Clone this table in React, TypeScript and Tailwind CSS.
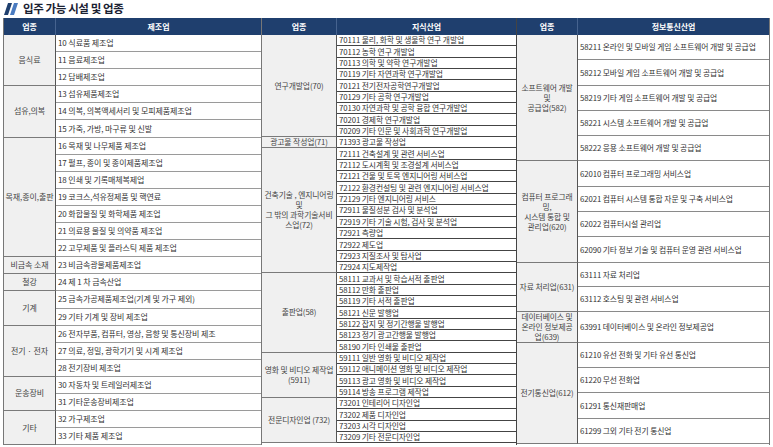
import React from 'react';

type Group = { name: string; items: string[]; rowClass?: string };

const manufacturing: Group[] = [
  { name: '음식료', items: ['10 식료품 제조업', '11 음료제조업', '12 담배제조업'] },
  {
    name: '섬유,의복',
    items: ['13 섬유제품제조업', '14 의복, 의복액세서리 및 모피제품제조업', '15 가죽, 가방, 마구류 및 신발'],
  },
  {
    name: '목재,종이,출판',
    items: [
      '16 목재 및 나무제품 제조업',
      '17 펄프, 종이 및 종이제품제조업',
      '18 인쇄 및 기록매체복제업',
      '19 코크스,석유정제품 및 핵연료',
      '20 화합물질 및 화학제품 제조업',
      '21 의료용 물질 및 의약품 제조업',
      '22 고무제품 및 플라스틱 제품 제조업',
    ],
  },
  { name: '비금속 소재', items: ['23 비금속광물제품제조업'] },
  { name: '철강', items: ['24 제 1 차 금속산업'] },
  { name: '기계', items: ['25 금속가공제품제조업(기계 및 가구 제외)', '29 기타 기계 및 장비 제조업'] },
  {
    name: '전기 · 전자',
    items: ['26 전자부품, 컴퓨터, 영상, 음향 및 통신장비 제조', '27 의료, 정밀, 광학기기 및 시계 제조업', '28 전기장비 제조업'],
  },
  { name: '운송장비', items: ['30 자동차 및 트레일러제조업', '31 기타운송장비제조업'] },
  { name: '기타', items: ['32 가구제조업', '33 기타 제품 제조업'] },
];

const knowledge: Group[] = [
  {
    name: '연구개발업(70)',
    items: [
      '70111 물리, 화학 및 생물학 연구 개발업',
      '70112 농학 연구 개발업',
      '70113 의학 및 약학 연구개발업',
      '70119 기타 자연과학 연구개발업',
      '70121 전기전자공학연구개발업',
      '70129 기타 공학 연구개발업',
      '70130 자연과학 및 공학 융합 연구개발업',
      '70201 경제학 연구개발업',
      '70209 기타 인문 및 사회과학 연구개발업',
    ],
  },
  { name: '광고물 작성업(71)', items: ['71393 광고물 작성업'] },
  {
    name: '건축기술 , 엔지니어링\n및\n그 밖의 과학기술서비\n스업(72)',
    items: [
      '72111 건축설계 및 관련 서비스업',
      '72112 도시계획 및 조경설계 서비스업',
      '72121 건물 및 토목 엔지니어링 서비스업',
      '72122 환경컨설팅 및 관련 엔지니어링 서비스업',
      '72129 기타 엔지니어링 서비스',
      '72911 물질성분 검사 및 분석업',
      '72919 기타 기술 시험, 검사 및 분석업',
      '72921 측량업',
      '72922 제도업',
      '72923 지질조사 및 탐사업',
      '72924 지도제작업',
    ],
  },
  {
    name: '출판업(58)',
    items: [
      '58111 교과서 및 학습서적 출판업',
      '58112 만화 출판업',
      '58119 기타 서적 출판업',
      '58121 신문 발행업',
      '58122 잡지 및 정기간행물 발행업',
      '58123 정기 광고간행물 발행업',
      '58190 기타 인쇄물 출판업',
    ],
  },
  {
    name: '영화 및 비디오 제작업\n(5911)',
    items: [
      '59111 일반 영화 및 비디오 제작업',
      '59112 애니메이션 영화 및 비디오 제작업',
      '59113 광고 영화 및 비디오 제작업',
      '59114 방송 프로그램 제작업',
    ],
  },
  {
    name: '전문디자인업 (732)',
    items: ['73201 인테리어 디자인업', '73202 제품 디자인업', '73203 시각 디자인업', '73209 기타 전문디자인업'],
  },
];

const ict: Group[] = [
  {
    name: '소프트웨어 개발\n및\n공급업(582)',
    items: [
      '58211 온라인 및 모바일 게임 소프트웨어 개발 및 공급업',
      '58212 모바일 게임 소프트웨어 개발 및 공급업',
      '58219 기타 게임 소프트웨어 개발 및 공급업',
      '58221 시스템 소프트웨어 개발 및 공급업',
      '58222 응용 소프트웨어 개발 및 공급업',
    ],
  },
  {
    name: '컴퓨터 프로그래\n밍,\n시스템 통합 및\n관리업(620)',
    items: [
      '62010 컴퓨터 프로그래밍 서비스업',
      '62021 컴퓨터 시스템 통합 자문 및 구축 서비스업',
      '62022 컴퓨터시설 관리업',
      '62090 기타 정보 기술 및 컴퓨터 운영 관련 서비스업',
    ],
  },
  { name: '자료 처리업(631)', items: ['63111 자료 처리업', '63112 호스팅 및 관련 서비스업'], rowClass: 'h-[24.5px]' },
  {
    name: '데이터베이스 및\n온라인 정보제공\n업(639)',
    items: ['63991 데이터베이스 및 온라인 정보제공업'],
    rowClass: 'h-[31px]',
  },
  {
    name: '전기통신업(612)',
    items: ['61210 유선 전화 및 기타 유선 통신업', '61220 무선 전화업', '61291 통신재판매업', '61299 그외 기타 전기 통신업'],
  },
];

function Section({
  title,
  groups,
  width,
  catWidth,
  rowClass,
  lineClass,
  edgeClass,
  textClass,
}: {
  title: string;
  groups: Group[];
  width: string;
  catWidth: string;
  rowClass: string;
  lineClass: string;
  edgeClass: string;
  textClass: string;
}) {
  return (
    <div className={`${width} flex flex-col shrink-0 ${edgeClass} ${textClass}`}>
      <div className="flex h-[17px] bg-[#1f3f6e] text-white font-bold text-[8px]">
        <div className={`${catWidth} shrink-0 flex items-center justify-center border-r border-[#46638f]`}>업종</div>
        <div className="flex-1 flex items-center justify-center">{title}</div>
      </div>
      {groups.map((group) => (
        <div key={group.name} className="flex">
          {/* category cell carries the group's bottom line so rows keep their fixed height */}
          <div
            className={`${catWidth} shrink-0 bg-[#f0f0f0] text-[#444] flex items-center justify-center text-center whitespace-pre-line leading-[10px] border-r border-b border-r-[#555] border-b-[#7a7a7a]`}
          >
            {group.name}
          </div>
          <div className="flex-1 flex flex-col min-w-0">
            {group.items.map((item) => (
              <div
                key={item}
                className={`${group.rowClass ?? rowClass} shrink-0 flex items-center pl-[2px] whitespace-nowrap overflow-hidden border-b ${lineClass}`}
              >
                {item}
              </div>
            ))}
          </div>
        </div>
      ))}
    </div>
  );
}

export default function App() {
  return (
    <div className="w-[773px] h-[447px] overflow-hidden bg-white font-['Noto_Sans_CJK_KR',sans-serif] text-[#333] tracking-[-0.1px]">
      <div className="flex items-center h-[18px] pl-[4px] gap-[4px]">
        <svg width="15" height="12" viewBox="0 0 15 12">
          <polygon points="4,0 8,0 4,12 0,12" fill="#1f3f6e" />
          <polygon points="10,0 14,0 10,12 6,12" fill="#4a7bc0" />
        </svg>
        <span className="text-[11.5px] font-bold text-[#1b2233] tracking-[-0.4px]">입주 가능 시설 및 업종</span>
      </div>
      <div className="flex pl-[3px]">
        <Section
          title="제조업"
          groups={manufacturing}
          width="w-[259px]"
          catWidth="w-[52px]"
          rowClass="h-[17.1px]"
          lineClass="border-[#9a9a9a]"
          edgeClass="border-l border-r border-[#777]"
          textClass="text-[8px]"
        />
        <Section
          title="지식산업"
          groups={knowledge}
          width="w-[255px]"
          catWidth="w-[75px]"
          rowClass="h-[11.35px]"
          lineClass="border-[#444]"
          edgeClass="border-r border-[#444]"
          textClass="text-[7.8px]"
        />
        <Section
          title="정보통신산업"
          groups={ict}
          width="w-[253px]"
          catWidth="w-[61px]"
          rowClass="h-[25.3px]"
          lineClass="border-[#8a8a8a]"
          edgeClass="border-r border-[#777]"
          textClass="text-[7.8px]"
        />
      </div>
    </div>
  );
}
